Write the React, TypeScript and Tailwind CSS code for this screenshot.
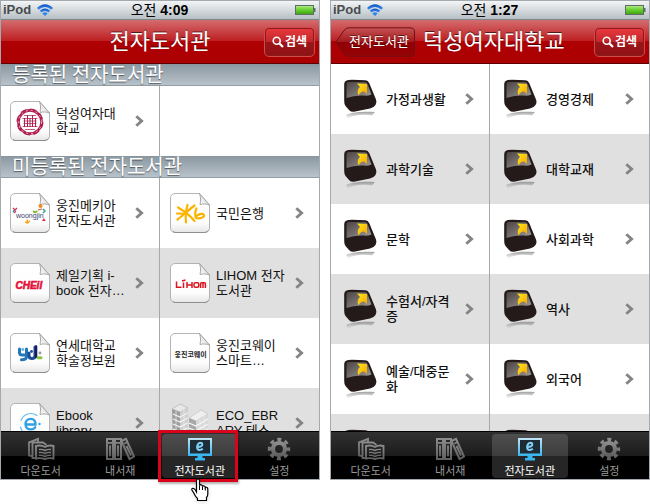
import type { ReactNode } from 'react';
import clsx from 'clsx';

interface Item {
  label: string;
  icon: ReactNode;
}

/* ---------- shared svg paint ---------- */

function Paints() {
  return (
    <svg width="0" height="0" className="absolute" aria-hidden="true">
      <defs>
        <linearGradient id="paper" x1="0" y1="0" x2="0" y2="1">
          <stop offset="0" stopColor="#ffffff" />
          <stop offset="0.75" stopColor="#fdfdfd" />
          <stop offset="1" stopColor="#e6e6e6" />
        </linearGradient>
        <linearGradient id="fold" x1="0" y1="1" x2="1" y2="0">
          <stop offset="0" stopColor="#ffffff" />
          <stop offset="1" stopColor="#c8c8c8" />
        </linearGradient>
        <linearGradient id="glass" x1="0" y1="0" x2="1" y2="1">
          <stop offset="0" stopColor="#4a4443" />
          <stop offset="1" stopColor="#a09c9b" />
        </linearGradient>
        <linearGradient id="arrow" x1="0" y1="0" x2="1" y2="1">
          <stop offset="0" stopColor="#ffe81a" />
          <stop offset="1" stopColor="#f5a400" />
        </linearGradient>
        <linearGradient id="reflect" x1="0" y1="0" x2="0" y2="1">
          <stop offset="0" stopColor="#777" stopOpacity="0.7" />
          <stop offset="1" stopColor="#999" stopOpacity="0" />
        </linearGradient>
        <linearGradient id="screen" x1="0" y1="0" x2="0" y2="1">
          <stop offset="0" stopColor="#c4e6f6" />
          <stop offset="1" stopColor="#35b4f0" />
        </linearGradient>
        <linearGradient id="wifi" x1="0" y1="0" x2="0" y2="1">
          <stop offset="0" stopColor="#0f4fc0" />
          <stop offset="1" stopColor="#3a97f5" />
        </linearGradient>
        <linearGradient id="battery" x1="0" y1="0" x2="0" y2="1">
          <stop offset="0" stopColor="#b4ec8a" />
          <stop offset="0.5" stopColor="#63cf2c" />
          <stop offset="1" stopColor="#3f9f10" />
        </linearGradient>
        <linearGradient id="metal" x1="0" y1="0" x2="0" y2="1">
          <stop offset="0" stopColor="#8c8c8c" />
          <stop offset="1" stopColor="#606060" />
        </linearGradient>
        <linearGradient id="backButton" x1="0" y1="0" x2="0" y2="1">
          <stop offset="0" stopColor="#c65355" />
          <stop offset="0.5" stopColor="#a3181b" />
          <stop offset="0.5" stopColor="#8f0004" />
          <stop offset="1" stopColor="#970206" />
        </linearGradient>
      </defs>
    </svg>
  );
}

/* ---------- list icons ---------- */

function Page({ children }: { children: ReactNode }) {
  return (
    <svg viewBox="0 0 40 40" className="size-10 shrink-0" aria-hidden="true">
      <path d="M5 .5H29.5L39.5 12V35a4.5 4.5 0 0 1-4.5 4.5H5A4.5 4.5 0 0 1 .5 35V5A4.5 4.5 0 0 1 5 .5Z" fill="url(#paper)" stroke="#b4b4b4" />
      <path d="M3 38.6Q4 39.5 6 39.5H34Q37 39.5 38.6 37.5" fill="none" stroke="#8e8e8e" />
      <path d="M29.5 .5C30.8 4 30.8 8 30 11.5C33 10.6 36.5 10.8 39.5 12Z" fill="url(#fold)" stroke="#a0a0a0" strokeWidth=".9" />
      {children}
    </svg>
  );
}

const deoksung = (
  <Page>
    <circle cx="20" cy="21" r="11.6" fill="none" stroke="#b01e4f" strokeWidth="2.6" />
    <circle cx="20" cy="21" r="12.9" fill="none" stroke="#b01e4f" strokeWidth="1.2" strokeDasharray="6.4 3.7" />
    <circle cx="20" cy="21" r="11.6" fill="none" stroke="#eab8c9" strokeWidth="1" strokeDasharray="2 3" />
    <path d="M14 14.5H26M12.5 17.5H27.5M13.5 20H26.5M13.5 22.5H26.5M12.5 25.5H27.5M15 28.5H25" stroke="#c25c80" strokeWidth="1" />
    <path d="M14.5 17V26M17.5 14V26M20 17V26M22.5 14V26M25.5 17V26" stroke="#b01e4f" strokeWidth="1" />
  </Page>
);

const woongjin = (
  <Page>
    <text x="6" y="25" fontSize="7" fill="#3a3f70">woongjin</text>
    <circle cx="30.5" cy="13" r="2" fill="#f08a1c" />
    <path d="M3 15l2 2 2-2M4 20l2-2" stroke="#d8344a" strokeWidth="1.3" fill="none" />
    <path d="M3 19l1.5-2" stroke="#2c86c8" strokeWidth="1.3" />
    <path d="M23 18l2 1.5 2.5-1.5" stroke="#7db928" strokeWidth="1.6" fill="none" />
    <path d="M33 16l2 2-2 2" stroke="#2da5a0" strokeWidth="1.5" fill="none" />
    <path d="M32 28l2-3 1.5 3Z" fill="#e0243c" />
    <path d="M15 29l2.500 1L20 28M17 26.500l1 4" stroke="#f2a51d" strokeWidth="1.5" fill="none" />
    <path d="M28 17l4-1" stroke="#e85a2a" strokeWidth="1.2" />
  </Page>
);

const kb = (
  <Page>
    <g fill="none" stroke="#fbb400" strokeWidth="2.2" strokeLinecap="round">
      <path d="M17.500 12C16 17 15.300 23 16 29.500" />
      <path d="M8 14.500C12.500 17 20 22.500 24.500 28" />
      <path d="M24.500 12.500C19 16.500 13 22.500 7.500 26.500" />
      <path d="M7 20.500L17 20.800" />
      <path d="M26.500 15.500C25 18.500 24.800 22 26 25C30 26 34.500 24.500 34 22C33.400 19.800 29 21 26.500 23" />
    </g>
  </Page>
);

const cheil = (
  <Page>
    <text x="5.500" y="26" fontSize="10" fontWeight="700" fontStyle="italic" fill="#e4113a" stroke="#e4113a" strokeWidth=".6">
      CHEil
    </text>
  </Page>
);

const lihom = (
  <Page>
    <g fill="none" stroke="#dd1420" strokeWidth="1.500">
      <path d="M6.500 18.500V24.200H11.500" />
      <path d="M13.500 19.500V25M12 18L15.500 17" />
      <path d="M17 19V25M22 19V25M17 22H22" />
      <rect x="24" y="19.700" width="4.800" height="4.600" rx="1.500" />
      <path d="M30.600 25V20.500Q30.600 19.700 31.500 19.700H34.500Q35.400 19.700 35.400 20.500V25M33 19.700V25" />
    </g>
  </Page>
);

const yonsei = (
  <Page>
    <g fill="none" strokeLinecap="round">
      <path d="M9.500 16V19.500Q9.500 22 12 22H14.500M16.500 16V23.500Q16.500 27 11.500 26.800" stroke="#2377b5" strokeWidth="3" />
      <path d="M19 20V22.500Q19 25.500 22 25.500Q25 25.500 25 22.500V14" stroke="#1b4f9c" strokeWidth="3" />
      <path d="M26 13.500V24" stroke="#191b5e" strokeWidth="2.600" />
      <path d="M28 24.800H31" stroke="#8cc63f" strokeWidth="3" />
    </g>
    <circle cx="12.800" cy="16.500" r="1.400" fill="#57b4df" />
    <circle cx="21.500" cy="18.500" r="1.400" fill="#1b4f9c" />
    <circle cx="30" cy="20" r="1.400" fill="#9a9a9a" />
  </Page>
);

const coway = (
  <Page>
    <text x="4.500" y="24" fontSize="7" fontWeight="700" fill="#222">웅진코웨이</text>
  </Page>
);

const ebook = (
  <Page>
    <g fill="none" stroke="#2f9fe6" strokeLinecap="round">
      <path d="M16 21.500H25.500C25.500 17.800 23.400 15.800 20.700 15.800C17.600 15.800 15.500 18.200 15.500 21.300C15.500 24.500 17.700 26.400 20.700 26.400C22.600 26.400 24.300 25.600 25.200 24.300" strokeWidth="2.300" />
      <path d="M27 12.500A10.500 10.500 0 0 0 11 17.500M10.500 24A10.500 10.500 0 0 0 27 30" strokeWidth="1.200" stroke="#6bbcf0" />
    </g>
    <circle cx="29.500" cy="21" r="1.200" fill="#2f9fe6" />
  </Page>
);

const buildings = (
  <svg viewBox="0 0 40 40" className="size-10 shrink-0" aria-hidden="true">
    <path d="M2 6L10 1L18 5L10 9Z" fill="#e9e9e9" stroke="#aaa" strokeWidth=".6" />
    <path d="M2 6L10 9V40H3Z" fill="#9d9d9d" />
    <path d="M10 9L18 5V40H10Z" fill="#cfcfcf" />
    <path d="M3 11L10 14L17.500 10M3 16L10 19L17.500 15M3 21L10 24L17.500 20M3 26L10 29L17.500 25M3 31L10 34L17.500 30" fill="none" stroke="#f3f3f3" strokeWidth="1.300" />
    <path d="M19 15L31 7L38 11L26 18Z" fill="#efefef" stroke="#bbb" strokeWidth=".6" />
    <path d="M19 15L26 18V40H19Z" fill="#a8a8a8" />
    <path d="M26 18L38 11V34L26 40Z" fill="#d8d8d8" />
    <path d="M19 20L26 23L38 16M19 25L26 28L38 21M19 30L26 33L38 26" fill="none" stroke="#f6f6f6" strokeWidth="1.300" />
    <path d="M30 16V38M34 13V36M14 7V38M6 8V38" stroke="#f1f1f1" strokeWidth=".7" />
  </svg>
);

function CategoryIcon() {
  return (
    <svg viewBox="0 0 40 40" className="size-10 shrink-0" aria-hidden="true">
      <path d="M6 36C13 32.500 26 32.500 35 33L32 36.500C24 35 13 36 8 40Z" fill="url(#reflect)" />
      <path d="M6.500 1.500Q8 .8 12 .8L25.500 1.200Q28 1.300 29.200 4L36 20.500Q37.200 23.500 35.500 26Q34 28.500 30 29.500L14 32.800Q11 33.200 9 31L5.500 27Q4.200 25.500 4.200 22V5Q4.300 2.300 6.500 1.500Z" fill="#231a19" />
      <path d="M6.500 5Q6.500 3 8.500 3L25 3.200Q26.800 3.300 27.500 5L31.500 15.500Q28 17 24 16.600Q15 16 6.500 19Z" fill="url(#glass)" />
      <path d="M17 4.500L27 5V15L24 12.500Q21 12 18.500 16.500Q16.300 11.500 20 8Z" fill="url(#arrow)" />
    </svg>
  );
}

/* ---------- small ui icons ---------- */

function Chevron() {
  return (
    <svg viewBox="0 0 9 12" className="ml-auto h-3 w-[9px] shrink-0" aria-hidden="true">
      <path d="M1.300 1.200L6.600 6L1.300 10.800" fill="none" stroke="#848484" strokeWidth="2.900" />
    </svg>
  );
}

function WifiIcon() {
  return (
    <svg viewBox="0 0 16 12" className="h-3 w-4" aria-hidden="true">
      <path d="M0 4Q8 -3.500 16 4L14.300 5.800Q8 0 1.700 5.800Z" fill="url(#wifi)" />
      <path d="M2.800 6.800Q8 2.200 13.200 6.800L11.500 8.500Q8 5.500 4.500 8.500Z" fill="url(#wifi)" />
      <path d="M5.400 9.400Q8 7.300 10.600 9.400L8 12Z" fill="#2c84ee" />
    </svg>
  );
}

function BatteryIcon() {
  return (
    <svg viewBox="0 0 21 10" className="h-2.5 w-[21px]" aria-hidden="true">
      <rect x=".5" y=".5" width="18" height="9" fill="url(#battery)" stroke="#5f6d66" />
      <rect x="19" y="3" width="1.500" height="4" fill="#5f6d66" />
    </svg>
  );
}

function SearchIcon() {
  return (
    <svg viewBox="0 0 12 12" className="size-3" aria-hidden="true">
      <circle cx="4.700" cy="4.700" r="3.500" fill="none" stroke="#fff" strokeWidth="1.600" />
      <path d="M7.200 7.200L11 11" stroke="#fff" strokeWidth="2.200" />
    </svg>
  );
}

function DownloadBooksIcon() {
  return (
    <svg viewBox="0 0 28 24" className="h-6 w-7" aria-hidden="true">
      <g fill="none" stroke="url(#metal)" strokeWidth="1.900">
        <path d="M5 19L2 18.500V5.500L11 1.800V5.500" />
        <path d="M8 21H5.500V5.500H16L19.500 8" />
        <path d="M18 10Q13.500 7.500 9 9V21.500Q13.500 20.500 18 22Q22 20.500 26.500 21.500V9Q22 7.500 18 10Z" />
        <path d="M12 12.500Q15 12 18 13.500Q21 12 24 12.500M12 15.500Q15 15 18 16.500Q21 15 24 15.500M12 18.500Q15 18 18 19.500Q21 18 24 18.500" strokeWidth="1.400" />
      </g>
    </svg>
  );
}

function ShelfIcon() {
  return (
    <svg viewBox="0 0 30 24" className="h-6 w-[30px]" aria-hidden="true">
      <g fill="none" stroke="url(#metal)" strokeWidth="2">
        <rect x="2" y="2" width="6" height="20" />
        <rect x="10" y="2" width="6" height="20" />
        <path d="M16.500 4L21 1.800L29 19.500L24.500 22Z" />
        <path d="M2 6H8M10 6H16M18 7.500L22.500 5" />
        <path d="M5 8.500V19.500M13 8.500V19.500M21.500 9L26 18.500" strokeWidth="1.800" />
      </g>
    </svg>
  );
}

function MonitorIcon() {
  return (
    <svg viewBox="0 0 26 24" className="h-6 w-[26px]" aria-hidden="true">
      <path d="M1 1H25V19H1Z" fill="url(#screen)" />
      <path d="M3 3H23V16.500H3Z" fill="#1d2c35" />
      <path d="M10.500 19H15.500V21H18V23.500H8V21H10.500Z" fill="#35b4f0" />
      <path d="M10.500 10Q15.300 9.700 15.300 7.500Q15.300 5.800 13.500 5.800Q10.300 6.300 10.100 10.300Q10.200 13 12.500 13Q14.500 13 15.800 11.800" fill="none" stroke="#7fd0f5" strokeWidth="2" />
    </svg>
  );
}

function GearIcon() {
  return (
    <svg viewBox="0 0 24 24" className="size-6" aria-hidden="true">
      <g stroke="url(#metal)" fill="none">
        <circle cx="12" cy="12" r="6" strokeWidth="4.200" />
        <circle cx="12" cy="12" r="9.400" strokeWidth="3.600" strokeDasharray="3.900 3.483" strokeDashoffset="1.950" />
      </g>
    </svg>
  );
}

function HandCursor() {
  return (
    <svg viewBox="0 0 18 24" className="absolute top-[46px] left-[31px] h-6 w-[18px] drop-shadow-sm" aria-hidden="true">
      <path
        d="M5.500 14V2.500Q5.500 1 7 1Q8.500 1 8.500 2.500V7.500Q9 6.500 10.200 6.800Q11.500 7 11.500 8.500Q12 7.500 13.200 8Q14.300 8.300 14.300 9.500Q15 9 16 9.500Q16.800 10 16.800 11V16Q16.800 18 15.500 19.500V22.500H6.500V20.500Q4 18 2.800 15L.9 12Q.5 10.500 1.800 10.300Q3.200 10.200 4.200 11.800Z"
        fill="#fff"
        stroke="#000"
        strokeWidth="1.200"
      />
      <path d="M8.500 7.500V12M11.500 8.500V12M14.300 9.500V12.500" stroke="#000" strokeWidth="1" />
    </svg>
  );
}

/* ---------- layout pieces ---------- */

function StatusBar({ period, time }: { period: string; time: string }) {
  return (
    <div className="grid h-[19px] grid-cols-3 items-center border-b border-[#7d868b] bg-linear-to-b from-[#f3f5f6] to-[#b7c0c5] pr-[3px] pl-0.5">
      <div className="flex items-center gap-[6px] text-[13px] leading-4 font-bold text-[#484c4e]">
        iPod
        <WifiIcon />
      </div>
      <div className="text-center text-sm leading-4 text-black">
        {period} <span className="font-bold">{time}</span>
      </div>
      <div className="flex justify-end">
        <BatteryIcon />
      </div>
    </div>
  );
}

function TitleBar({ title, back }: { title: string; back?: string }) {
  return (
    <header className="grid h-11 grid-cols-[1fr_auto_1fr] items-center border-b border-[#5e0000] bg-[linear-gradient(#d46c6e,#bd1d20_50%,#af0004_50%,#aa0000)] px-1">
      <div>
        {back && (
          <button type="button" className="relative mr-2 flex h-[30px] w-20 items-center justify-center pl-2 text-[13px] leading-4 text-white text-shadow-[0_-1px_0_rgb(0_0_0/0.5)]">
            <svg viewBox="0 0 80 30" className="absolute inset-0 h-full w-full" aria-hidden="true">
              <path d="M14 .8H75Q79.500 .8 79.500 5V25Q79.500 29.200 75 29.200H14Q11 29.200 9 26.500L.8 15L9 3.500Q11 .8 14 .8Z" fill="url(#backButton)" stroke="#6e1113" />
            </svg>
            <span className="relative">{back}</span>
          </button>
        )}
      </div>
      <h1 className="text-[22px] leading-7 whitespace-nowrap text-white text-shadow-[0_-1px_0_rgb(0_0_0/0.6)]">{title}</h1>
      <button
        type="button"
        className="flex h-[30px] w-[51px] items-center justify-center gap-px justify-self-end rounded-[5px] border border-[#d04a4c] bg-[linear-gradient(#ea3a40,#bf2529_50%,#9c1518_50%,#8e1215)] text-xs leading-4 font-bold text-white shadow-[inset_0_0_0_1px_#8a1a1c]"
      >
        <SearchIcon />
        검색
      </button>
    </header>
  );
}

function SectionTitle({ children }: { children: ReactNode }) {
  return (
    <h2 className="h-[22px] border-t border-b border-t-[#8a959d] border-b-[#939da4] bg-linear-to-b from-[#8d9aa3] to-[#b8c2ca] pl-[11px] font-['Noto_Sans_CJK_KR',sans-serif] text-xl leading-[18px] text-white text-shadow-[0_1px_1px_rgb(0_0_0/0.5)]">
      {children}
    </h2>
  );
}

function ItemGrid({ items, className }: { items: Item[]; className?: string }) {
  return (
    <ul className={clsx('grid grid-cols-2 text-[13px] leading-[15px] text-[#111]', className)}>
      {items.map((item, i) => (
        <li
          key={item.label}
          className={clsx('h-[70px]', i % 4 > 1 ? 'bg-[#e0e0e0]' : 'bg-white', i % 2 === 0 && 'border-r border-[#a8a8a8]')}
        >
          <a href="#" className={clsx('flex h-full items-center gap-[6px] pr-[15px]', i % 2 === 0 ? 'pl-[9px]' : 'pl-2.5')}>
            {item.icon}
            <span className="whitespace-pre">{item.label}</span>
            <Chevron />
          </a>
        </li>
      ))}
    </ul>
  );
}

const tabs = [
  { label: '다운도서', icon: <DownloadBooksIcon /> },
  { label: '내서재', icon: <ShelfIcon /> },
  { label: '전자도서관', icon: <MonitorIcon /> },
  { label: '설정', icon: <GearIcon /> },
];

function TabBar({ marked }: { marked?: boolean }) {
  return (
    <nav className="grid h-12 grid-cols-4 border-t border-black bg-[linear-gradient(#313131,#1c1c1c_50%,#000_50%)]">
      {tabs.map((tab) => {
        const active = tab.label === '전자도서관';
        return (
          <div key={tab.label} className="relative px-0.5 pt-0.5 pb-px">
            <button
              type="button"
              className={clsx(
                'flex h-11 w-full flex-col items-center justify-between rounded-[4px] pt-[3px] text-[11px] leading-[14px]',
                active ? 'bg-white/15 text-white' : 'text-[#9a9a9a]',
              )}
            >
              {tab.icon}
              {tab.label}
            </button>
            {active && marked && (
              <>
                <div className="absolute -top-0.5 -left-0.5 h-[52px] w-20 border-3 border-[#d9041c] shadow-[1px_2px_2px_rgb(0_0_0/0.3)]" />
                <HandCursor />
              </>
            )}
          </div>
        );
      })}
    </nav>
  );
}

function Phone({ children }: { children: ReactNode }) {
  return <section className="min-w-0 border border-[#a3a9af] bg-white">{children}</section>;
}

const registered: Item[] = [{ label: '덕성여자대\n학교', icon: deoksung }];

const unregistered: Item[] = [
  { label: '웅진메키아\n전자도서관', icon: woongjin },
  { label: '국민은행', icon: kb },
  { label: '제일기획 i-\nbook 전자…', icon: cheil },
  { label: 'LIHOM 전자\n도서관', icon: lihom },
  { label: '연세대학교\n학술정보원', icon: yonsei },
  { label: '웅진코웨이\n스마트…', icon: coway },
  { label: 'Ebook\nlibrary', icon: ebook },
  { label: 'ECO_EBR\nARY 테스', icon: buildings },
];

const categories: Item[] = [
  '가정과생활',
  '경영경제',
  '과학기술',
  '대학교재',
  '문학',
  '사회과학',
  '수험서/자격\n증',
  '역사',
  '예술/대중문\n화',
  '외국어',
  '',
  ' ',
].map((label) => ({ label, icon: <CategoryIcon /> }));

export default function App() {
  return (
    <main className="grid min-h-screen grid-cols-2 items-start gap-2.5 bg-white pb-6 font-['Liberation_Sans','Noto_Sans_CJK_KR',sans-serif]">
      <Paints />
      <Phone>
        <StatusBar period="오전" time="4:09" />
        <TitleBar title="전자도서관" />
        <div className="h-[367px] overflow-hidden">
          <SectionTitle>등록된 전자도서관</SectionTitle>
          <ItemGrid items={registered} />
          <SectionTitle>미등록된 전자도서관</SectionTitle>
          <ItemGrid items={unregistered} />
        </div>
        <TabBar marked />
      </Phone>
      <Phone>
        <StatusBar period="오전" time="1:27" />
        <TitleBar title="덕성여자대학교" back="전자도서관" />
        <div className="h-[367px] overflow-hidden">
          <ItemGrid items={categories} className="font-medium" />
        </div>
        <TabBar />
      </Phone>
    </main>
  );
}
